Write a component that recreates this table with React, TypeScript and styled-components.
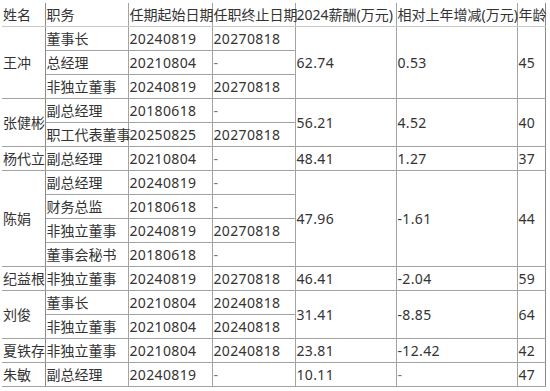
import React from 'react';
import styled, { createGlobalStyle } from 'styled-components';

const GlobalStyle = createGlobalStyle`
  html, body {
    margin: 0;
    padding: 0;
    background: #fff;
  }
  body {
    font-family: "Noto Sans", "Noto Sans CJK SC", sans-serif;
    color: #333;
  }
`;

const Sheet = styled.table`
  margin: 3px 0 0 2px;
  border-collapse: collapse;
  table-layout: fixed;
  width: 543px;
  font-size: 14px;
  line-height: 18px;
  color: #333;
`;

const HeadCell = styled.th`
  height: 23px;
  padding: 0 0 0 1px;
  font-weight: normal;
  text-align: left;
  white-space: nowrap;
  overflow: visible;
  border-left: 1px solid #a3a3a3;
  border-right: 1px solid #a3a3a3;
  border-bottom: 1px solid #c8c8c8;
  &:first-child {
    border-left: none;
    border-right-color: #8a8a8a;
  }
  &:last-child {
    border-right-color: #8a8a8a;
  }
`;

const Cell = styled.td<{ $name?: boolean; $num?: boolean; $last?: boolean }>`
  height: 23px;
  padding: 0 0 0 1px;
  text-align: left;
  vertical-align: middle;
  white-space: nowrap;
  overflow: visible;
  border: 1px solid #a3a3a3;
  letter-spacing: ${(p) => (p.$num ? '0.35px' : '0')};
  ${(p) => (p.$name ? 'border-left: none; border-right-color: #8a8a8a;' : '')}
  ${(p) => (p.$last ? 'border-right-color: #8a8a8a;' : '')}
`;

const Dash = styled.span`
  color: #777;
`;

type Post = { title: string; start: string; end: string };
type Person = { name: string; posts: Post[]; pay: string; change: string; age: string };

const people: Person[] = [
  {
    name: '王冲',
    posts: [
      { title: '董事长', start: '20240819', end: '20270818' },
      { title: '总经理', start: '20210804', end: '-' },
      { title: '非独立董事', start: '20240819', end: '20270818' },
    ],
    pay: '62.74',
    change: '0.53',
    age: '45',
  },
  {
    name: '张健彬',
    posts: [
      { title: '副总经理', start: '20180618', end: '-' },
      { title: '职工代表董事', start: '20250825', end: '20270818' },
    ],
    pay: '56.21',
    change: '4.52',
    age: '40',
  },
  {
    name: '杨代立',
    posts: [{ title: '副总经理', start: '20210804', end: '-' }],
    pay: '48.41',
    change: '1.27',
    age: '37',
  },
  {
    name: '陈娟',
    posts: [
      { title: '副总经理', start: '20240819', end: '-' },
      { title: '财务总监', start: '20180618', end: '-' },
      { title: '非独立董事', start: '20240819', end: '20270818' },
      { title: '董事会秘书', start: '20180618', end: '-' },
    ],
    pay: '47.96',
    change: '-1.61',
    age: '44',
  },
  {
    name: '纪益根',
    posts: [{ title: '非独立董事', start: '20240819', end: '20270818' }],
    pay: '46.41',
    change: '-2.04',
    age: '59',
  },
  {
    name: '刘俊',
    posts: [
      { title: '董事长', start: '20210804', end: '20240818' },
      { title: '非独立董事', start: '20210804', end: '20240818' },
    ],
    pay: '31.41',
    change: '-8.85',
    age: '64',
  },
  {
    name: '夏铁存',
    posts: [{ title: '非独立董事', start: '20210804', end: '20240818' }],
    pay: '23.81',
    change: '-12.42',
    age: '42',
  },
  {
    name: '朱敏',
    posts: [{ title: '副总经理', start: '20240819', end: '-' }],
    pay: '10.11',
    change: '-',
    age: '47',
  },
];

const headers = ['姓名', '职务', '任期起始日期', '任职终止日期', '2024薪酬(万元)', '相对上年增减(万元)', '年龄'];
const widths = [43, 83, 84, 83, 101, 121, 28];

const show = (v: string) => (v === '-' ? <Dash>-</Dash> : v);

export default function App() {
  return (
    <>
      <GlobalStyle />
      <Sheet>
        <colgroup>
          {widths.map((w, i) => (
            <col key={i} style={{ width: w }} />
          ))}
        </colgroup>
        <thead>
          <tr>
            {headers.map((h) => (
              <HeadCell key={h}>{h}</HeadCell>
            ))}
          </tr>
        </thead>
        <tbody>
          {people.map((p) =>
            p.posts.map((post, i) => (
              <tr key={p.name + i}>
                {i === 0 && (
                  <Cell $name rowSpan={p.posts.length}>
                    {p.name}
                  </Cell>
                )}
                <Cell>{post.title}</Cell>
                <Cell $num>{show(post.start)}</Cell>
                <Cell $num>{show(post.end)}</Cell>
                {i === 0 && (
                  <>
                    <Cell $num rowSpan={p.posts.length}>{p.pay}</Cell>
                    <Cell $num rowSpan={p.posts.length}>{show(p.change)}</Cell>
                    <Cell $num $last rowSpan={p.posts.length}>{p.age}</Cell>
                  </>
                )}
              </tr>
            ))
          )}
        </tbody>
      </Sheet>
    </>
  );
}
